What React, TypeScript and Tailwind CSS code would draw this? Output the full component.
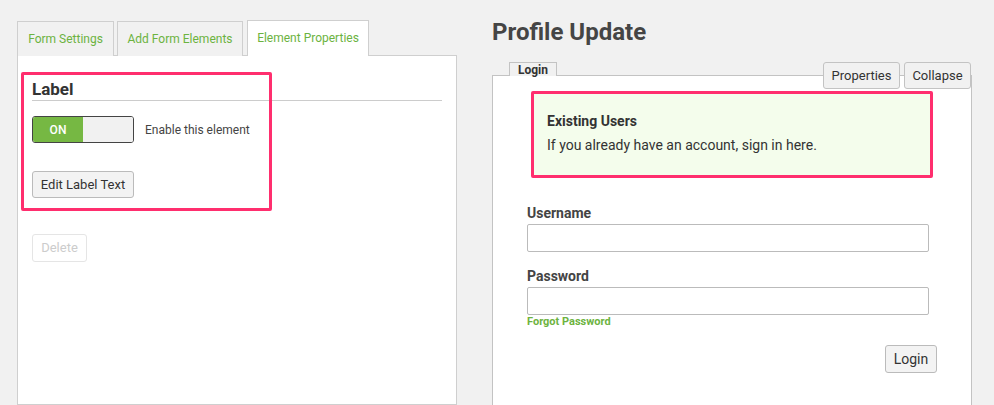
import React from 'react';

const font = { fontFamily: 'Roboto, "Liberation Sans", Arial, sans-serif' };

function LeftPanel() {
  return (
    <div className="w-[440px] ml-[17px] pt-[20px] flex flex-col">
      {/* Tabs */}
      <div className="flex items-end -mb-px relative z-10">
        <div className="w-[97px] h-[35px] flex items-center justify-center border border-b-0 border-[#cfcfcf] bg-[#f1f1f1] text-[12px] text-[#6cb33f]">
          Form Settings
        </div>
        <div className="w-[126px] h-[35px] ml-[3px] flex items-center justify-center border border-b-0 border-[#cfcfcf] bg-[#f1f1f1] text-[12px] text-[#6cb33f]">
          Add Form Elements
        </div>
        <div className="w-[122px] h-[36px] ml-[4px] flex items-center justify-center border border-b-0 border-[#cfcfcf] bg-white text-[12px] text-[#6cb33f] pb-px">
          Element Properties
        </div>
      </div>

      {/* Panel */}
      <div className="relative h-[360px] bg-white border border-[#cfcfcf] px-[14px] pt-[24px]">
        <h3 className="text-[17px] leading-[19px] font-bold text-[#333] border-b border-[#cccccc] pb-px">
          Label
        </h3>

        <div className="mt-[15px] flex items-center">
          <div className="w-[102px] h-[27px] flex border border-[#444] rounded-[3px] overflow-hidden">
            <div className="w-[50px] bg-[#76b843] text-white text-[12px] font-medium flex items-center justify-center">
              ON
            </div>
            <div className="flex-1 bg-[#f1f1f1]" />
          </div>
          <span className="ml-[11px] text-[12px] text-[#444]">Enable this element</span>
        </div>

        <button className="mt-[28px] w-[102px] h-[27px] bg-[#f3f3f3] border border-[#bbb] rounded-[3px] text-[13px] text-[#333]">
          Edit Label Text
        </button>

        <div className="mt-[36px]">
          <button className="w-[55px] h-[28px] bg-white border border-[#e5e5e5] rounded-[3px] text-[13px] text-[#cccccc]">
            Delete
          </button>
        </div>

        {/* highlight annotation */}
        <div className="absolute left-[3px] top-[16px] w-[251px] h-[139px] border-[3px] border-[#ff2e6e] rounded-[2px] pointer-events-none" />
      </div>
    </div>
  );
}

function RightPanel() {
  return (
    <div className="w-[480px] ml-[35px] pt-[18px] flex flex-col">
      <h1 className="text-[24px] leading-[28px] font-bold text-[#454545]">Profile Update</h1>

      <div className="relative mt-[16px]">
        <div className="flex -mb-px relative z-10">
          <div className="ml-[17px] w-[48px] h-[14px] border border-b-0 border-[#c3c3c3] bg-[#f1f1f1] text-[12px] leading-[12px] font-bold text-[#333] flex justify-center pt-px">
            Login
          </div>
        </div>

        <div className="h-[340px] bg-white border border-[#c3c3c3] pt-[15px]">
          <div className="ml-[38px] w-[402px] bg-[#f4fdec] border-[3px] border-[#ff2e6e] rounded-[2px] pl-[13px] pt-[17px] pb-[20px]">
            <div className="text-[14px] leading-[20px] font-bold text-[#333]">Existing Users</div>
            <div className="mt-[4px] text-[14px] leading-[20px] text-[#333]">
              If you already have an account, sign in here.
            </div>
          </div>

          <div className="ml-[34px] w-[402px] mt-[25px]">
            <label className="block text-[14px] leading-[20px] font-bold text-[#444]">Username</label>
            <input className="mt-[1px] block w-[402px] h-[28px] border border-[#bbb] rounded-[2px] bg-white" />

            <label className="block mt-[14px] text-[14px] leading-[20px] font-bold text-[#444]">Password</label>
            <input type="password" className="mt-[1px] block w-[402px] h-[28px] border border-[#bbb] rounded-[2px] bg-white" />
            <div className="text-[11px] leading-[14px] font-bold text-[#6db33f]">Forgot Password</div>
          </div>

          <div className="flex justify-end pr-[34px] mt-[16px]">
            <button className="w-[52px] h-[28px] bg-[#f3f3f3] border border-[#bbb] rounded-[3px] text-[14px] text-[#333]">
              Login
            </button>
          </div>
        </div>

        {/* panel buttons overlapping the top edge */}
        <div className="absolute top-0 right-[1px] flex gap-[4px] z-20">
          <button className="w-[77px] h-[27px] bg-[#f1f1f1] border border-[#c3c3c3] rounded-[3px] text-[13px] text-[#333]">
            Properties
          </button>
          <button className="w-[67px] h-[27px] bg-[#f1f1f1] border border-[#c3c3c3] rounded-[3px] text-[13px] text-[#333]">
            Collapse
          </button>
        </div>
      </div>
    </div>
  );
}

export default function App() {
  return (
    <div style={font} className="w-[994px] h-[405px] overflow-hidden bg-[#f1f1f1] flex">
      <LeftPanel />
      <RightPanel />
    </div>
  );
}
